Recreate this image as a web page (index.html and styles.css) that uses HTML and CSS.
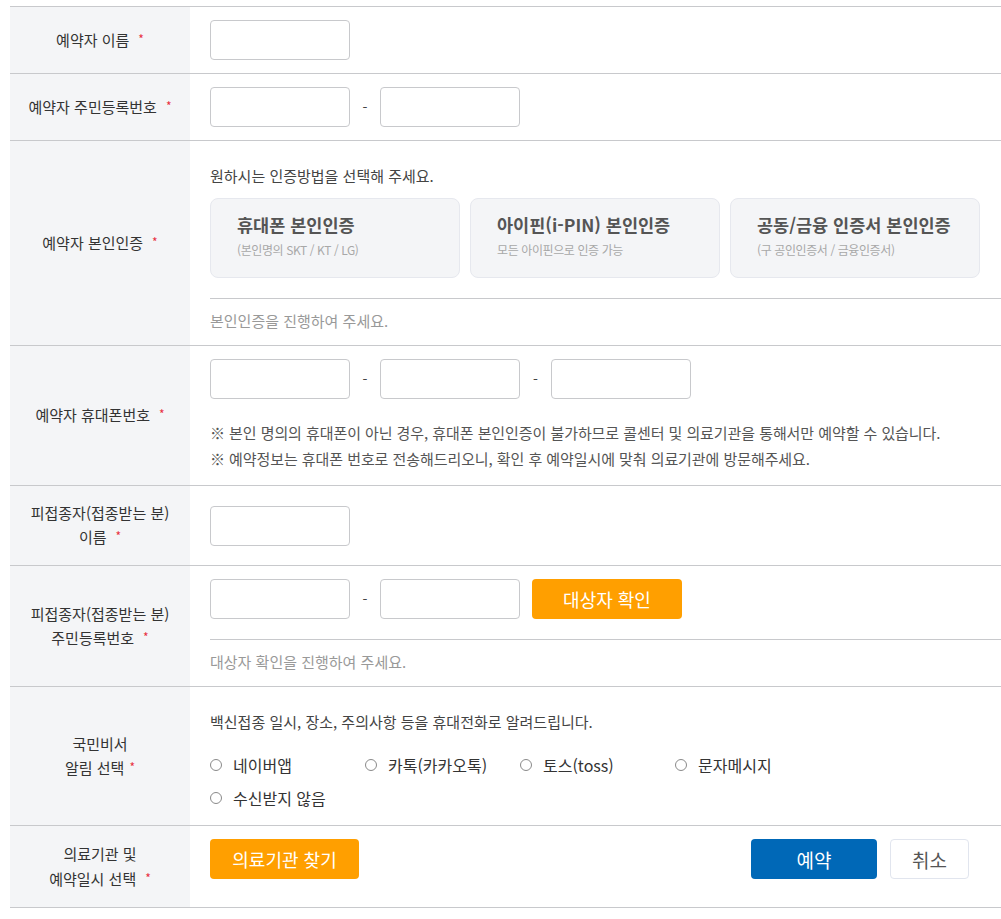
FILE: index.html
```html
<!DOCTYPE html>
<html lang="ko">
<head>
<meta charset="utf-8">
<title>예약</title>
<link rel="stylesheet" href="styles.css">
</head>
<body>
<div class="form">
  <div class="row">
    <div class="label"><div>예약자 이름<span class="req">*</span></div></div>
    <div class="field">
      <div class="inputs"><span class="input"></span></div>
    </div>
  </div>

  <div class="row">
    <div class="label"><div>예약자 주민등록번호<span class="req">*</span></div></div>
    <div class="field">
      <div class="inputs"><span class="input"></span><span class="dash">-</span><span class="input"></span></div>
    </div>
  </div>

  <div class="row">
    <div class="label"><div>예약자 본인인증<span class="req">*</span></div></div>
    <div class="field">
      <p class="intro">원하시는 인증방법을 선택해 주세요.</p>
      <div class="cards">
        <div class="card"><div class="card-title">휴대폰 본인인증</div><div class="card-sub">(본인명의 SKT / KT / LG)</div></div>
        <div class="card"><div class="card-title">아이핀(i-PIN) 본인인증</div><div class="card-sub">모든 아이핀으로 인증 가능</div></div>
        <div class="card"><div class="card-title">공동/금융 인증서 본인인증</div><div class="card-sub">(구 공인인증서 / 금융인증서)</div></div>
      </div>
      <div class="divider"></div>
      <p class="hint">본인인증을 진행하여 주세요.</p>
    </div>
  </div>

  <div class="row">
    <div class="label"><div>예약자 휴대폰번호<span class="req">*</span></div></div>
    <div class="field">
      <div class="inputs"><span class="input"></span><span class="dash">-</span><span class="input"></span><span class="dash">-</span><span class="input"></span></div>
      <ul class="notes">
        <li>※ 본인 명의의 휴대폰이 아닌 경우, 휴대폰 본인인증이 불가하므로 콜센터 및 의료기관을 통해서만 예약할 수 있습니다.</li>
        <li>※ 예약정보는 휴대폰 번호로 전송해드리오니, 확인 후 예약일시에 맞춰 의료기관에 방문해주세요.</li>
      </ul>
    </div>
  </div>

  <div class="row">
    <div class="label"><div>피접종자(접종받는 분)<br>이름<span class="req">*</span></div></div>
    <div class="field center">
      <div class="inputs"><span class="input"></span></div>
    </div>
  </div>

  <div class="row">
    <div class="label"><div>피접종자(접종받는 분)<br>주민등록번호<span class="req">*</span></div></div>
    <div class="field">
      <div class="inputs"><span class="input"></span><span class="dash">-</span><span class="input"></span><button class="btn orange check">대상자 확인</button></div>
      <div class="divider"></div>
      <p class="hint">대상자 확인을 진행하여 주세요.</p>
    </div>
  </div>

  <div class="row">
    <div class="label"><div>국민비서<br>알림 선택<span class="req tight">*</span></div></div>
    <div class="field alarm">
      <p class="intro">백신접종 일시, 장소, 주의사항 등을 휴대전화로 알려드립니다.</p>
      <div class="radios">
        <label class="radio"><span class="circle"></span>네이버앱</label>
        <label class="radio"><span class="circle"></span>카톡(카카오톡)</label>
        <label class="radio"><span class="circle"></span>토스(toss)</label>
        <label class="radio"><span class="circle"></span>문자메시지</label>
        <label class="radio"><span class="circle"></span>수신받지 않음</label>
      </div>
    </div>
  </div>

  <div class="row">
    <div class="label tall"><div>의료기관 및<br>예약일시 선택<span class="req">*</span></div></div>
    <div class="field actions">
      <button class="btn orange find">의료기관 찾기</button>
      <div class="right">
        <button class="btn blue">예약</button>
        <button class="btn cancel">취소</button>
      </div>
    </div>
  </div>
</div>
</body>
</html>
```

FILE: styles.css
```css
* { box-sizing: border-box; }

body {
  margin: 0;
  background: #fff;
  font-family: "Noto Sans CJK KR", "Noto Sans", sans-serif;
  font-size: 15px;
  color: #333;
}

.form {
  margin: 6px 0 0 10px;
  border-top: 1px solid #c8c9cc;
}

.row {
  display: grid;
  grid-template-columns: 180px 1fr;
  border-bottom: 1px solid #c8c9cc;
}

.label {
  background: #f4f5f7;
  display: flex;
  align-items: center;
  justify-content: center;
  text-align: center;
  padding: 15px 0;
  line-height: 24px;
  color: #333;
}

.label.tall { line-height: 25px; }

.req {
  color: #e8303f;
  font-size: 12px;
  margin-left: 9px;
  position: relative;
  top: -2px;
}

.req.tight { margin-left: 5px; }

.field {
  padding: 13px 0 13px 20px;
  min-width: 0;
}

.field.center {
  display: flex;
  align-items: center;
}

.inputs {
  display: flex;
  align-items: center;
}

.input {
  display: block;
  width: 140px;
  height: 40px;
  border: 1px solid #c8c9cc;
  border-radius: 4px;
  background: #fff;
}

.dash {
  width: 30px;
  text-align: center;
  color: #444;
  font-size: 14px;
}

.dash + .input + .dash { width: 31px; }

.intro {
  margin: 11px 0 0;
  line-height: 22px;
  color: #444;
}

.cards {
  display: grid;
  grid-template-columns: repeat(3, 250px);
  gap: 10px;
  margin-top: 11px;
}

.card {
  height: 80px;
  background: #f4f5f7;
  border: 1px solid #e6e8ee;
  border-radius: 8px;
  padding: 13px 0 0 26px;
}

.card-title {
  font-size: 17.5px;
  font-weight: 700;
  color: #555;
  line-height: 26px;
}

.card-sub {
  font-size: 12px;
  color: #a8a8a8;
  line-height: 18px;
  margin-top: 3px;
  letter-spacing: -0.4px;
}

.divider {
  height: 1px;
  background: #c8c9cc;
  margin-top: 20px;
}

.hint {
  margin: 11px 0 0;
  line-height: 22px;
  color: #999;
}

.notes {
  list-style: none;
  margin: 21px 0 0;
  padding: 0;
  line-height: 26px;
  color: #555;
  letter-spacing: -0.07px;
}

.btn {
  font-family: inherit;
  border: none;
  border-radius: 4px;
  height: 40px;
  cursor: pointer;
  padding: 0;
}

.btn.orange {
  background: #ff9f00;
  color: #fff;
}

.btn.check {
  width: 150px;
  margin-left: 12px;
  font-size: 18px;
}

.btn.find {
  width: 149px;
  font-size: 18px;
}

.btn.blue {
  width: 126px;
  background: #0068b7;
  color: #fff;
  font-size: 19px;
}

.btn.cancel {
  width: 79px;
  background: #fff;
  border: 1px solid #e1e5ee;
  color: #555;
  font-size: 19px;
}

.field.alarm { padding-bottom: 16px; }

.radios {
  display: grid;
  grid-template-columns: repeat(4, 155px);
  row-gap: 11px;
  margin-top: 21px;
}

.radio {
  display: flex;
  align-items: center;
  line-height: 22px;
  font-size: 16px;
  color: #333;
}

.circle {
  width: 12px;
  height: 12px;
  border: 1px solid #8a8a8a;
  border-radius: 50%;
  margin-right: 11px;
  flex: none;
}

.field.actions {
  display: flex;
  align-items: flex-start;
  justify-content: space-between;
  padding-right: 32px;
}

.right {
  display: flex;
  gap: 13px;
}
```
